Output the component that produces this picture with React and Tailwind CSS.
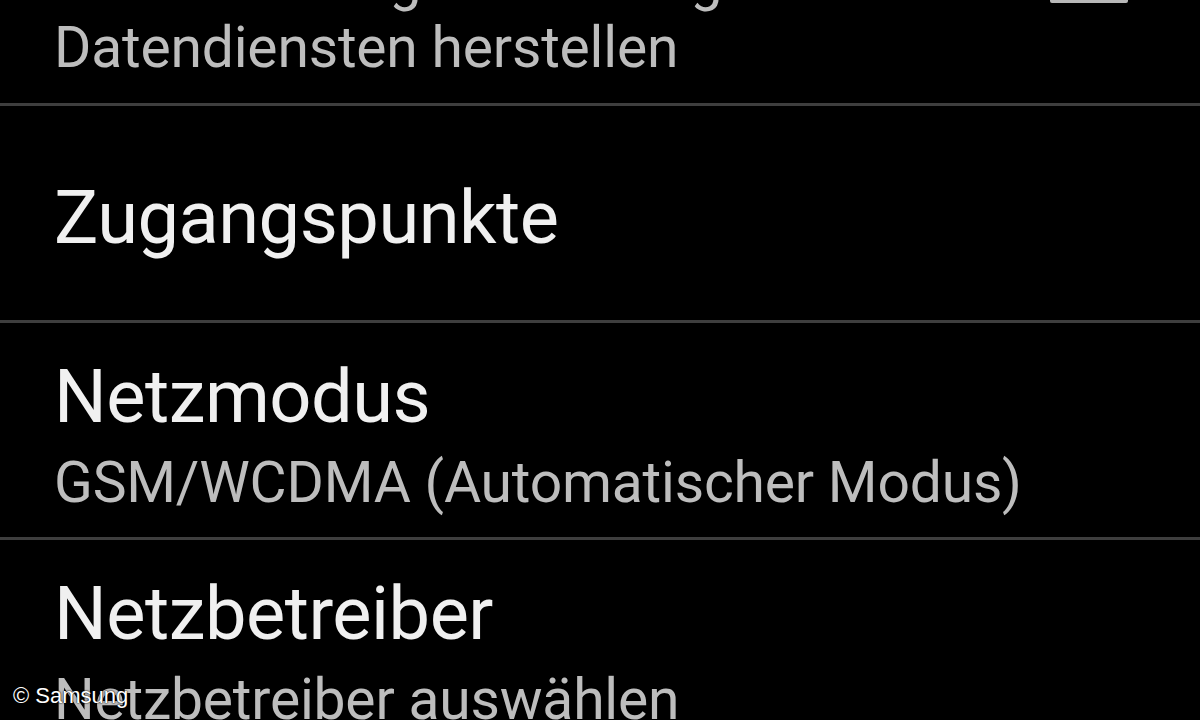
import React from "react";

const font = { fontFamily: "Roboto, 'Noto Sans', 'DejaVu Sans', sans-serif" };

function Divider() {
  return <div className="h-[3px] w-full bg-[#3e3e3e] shrink-0" />;
}

export default function App() {
  return (
    <div className="relative w-[1200px] h-[720px] bg-black overflow-hidden" style={font}>
      <div className="flex flex-col mt-[-54px]">
        {/* Row 1: Daten-Roaming (cut off) */}
        <div className="flex items-start pl-[54px] pr-[72px] pb-[21px]">
          <div className="flex-1 text-[57px] leading-[68px] text-[#bdbdbd] tracking-[-0.2px]">
            <div>Beim Roaming Verbindung mit</div>
            <div>Datendiensten herstellen</div>
          </div>
          <div className="mt-[-3px] w-[78px] h-[60px] border-[3px] border-[#b8b8b8] rounded-[2px] shrink-0" />
        </div>
        <Divider />

        {/* Row 2 */}
        <div className="pl-[54px] pt-[75px] pb-[65px]">
          <div className="text-[74px] leading-[74px] text-[#f0f0f0] tracking-[-0.5px]">Zugangspunkte</div>
        </div>
        <Divider />

        {/* Row 3 */}
        <div className="pl-[54px] pt-[37px] pb-[20px] flex flex-col gap-[15px]">
          <div className="text-[74px] leading-[74px] text-[#f0f0f0] tracking-[-0.5px]">Netzmodus</div>
          <div className="text-[57px] leading-[68px] text-[#bdbdbd] tracking-[-0.2px]">GSM/WCDMA (Automatischer Modus)</div>
        </div>
        <Divider />

        {/* Row 4 */}
        <div className="pl-[54px] pt-[37px] pb-[20px] flex flex-col gap-[15px]">
          <div className="text-[74px] leading-[74px] text-[#f0f0f0] tracking-[-0.5px]">Netzbetreiber</div>
          <div className="text-[57px] leading-[68px] text-[#bdbdbd] tracking-[-0.2px]">Netzbetreiber auswählen</div>
        </div>
      </div>

      <div
        className="absolute left-[13px] top-[683px] text-[22px] leading-[26px] text-white"
        style={{ fontFamily: "'Liberation Sans', Arial, sans-serif", textShadow: "0 0 2px #000, 0 0 1px #000" }}
      >
        © Samsung
      </div>
    </div>
  );
}
